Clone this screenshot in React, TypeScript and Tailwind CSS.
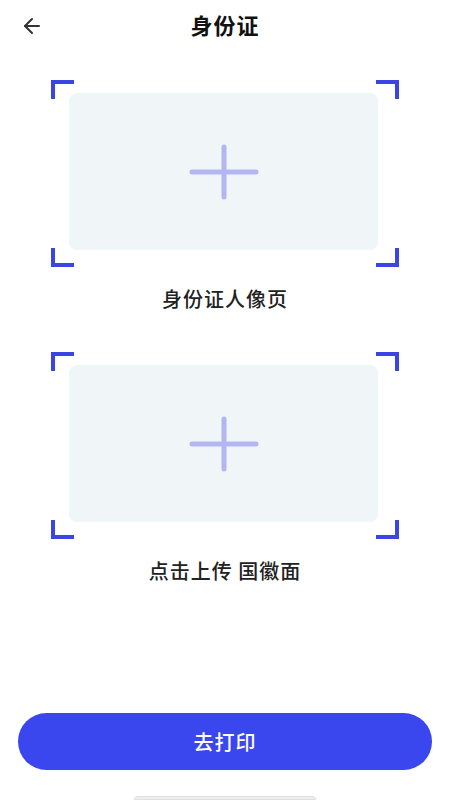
import { ArrowLeft } from "lucide-react";

function Corner({ pos }: { pos: "tl" | "tr" | "bl" | "br" }) {
  const cls = {
    tl: "top-0 left-0 border-t-4 border-l-4",
    tr: "top-0 right-0 border-t-4 border-r-4",
    bl: "bottom-0 left-0 border-b-4 border-l-4",
    br: "bottom-0 right-0 border-b-4 border-r-4",
  }[pos];
  return <span className={`absolute w-[23px] h-[19px] border-[#3b45e6] ${cls}`} />;
}

function UploadFrame({ label }: { label: string }) {
  return (
    <div className="flex flex-col items-center">
      <div className="relative w-[348px] h-[187px] flex items-center justify-center">
        <Corner pos="tl" />
        <Corner pos="tr" />
        <Corner pos="bl" />
        <Corner pos="br" />
        <div className="w-[309px] h-[157px] rounded-lg bg-[#f0f5f8] flex items-center justify-center -ml-[3px] -mt-[4px]">
          <svg width="70" height="56" viewBox="0 0 70 56">
            <path d="M3 28H67M35 3V53" stroke="#b3b6f1" strokeWidth="5" strokeLinecap="round" />
          </svg>
        </div>
      </div>
      <p className="mt-[19px] text-[20px] font-medium text-[#222] tracking-[1px] leading-[26px]">{label}</p>
    </div>
  );
}

export default function App() {
  return (
    <div
      className="w-[450px] h-[800px] bg-white flex flex-col relative"
      style={{ fontFamily: '"Noto Sans CJK SC", "Noto Sans", sans-serif' }}
    >
      <header className="h-[54px] flex items-center relative">
        <ArrowLeft className="absolute left-[20px] top-[14px] text-[#333]" size={24} strokeWidth={2} />
        <h1 className="mx-auto -mt-[5px] text-[22px] font-bold text-[#111] tracking-[1px]">身份证</h1>
      </header>

      <div className="flex flex-col items-center gap-[40px] mt-[26px]">
        <UploadFrame label="身份证人像页" />
        <UploadFrame label="点击上传 国徽面" />
      </div>

      <div className="mt-auto px-[18px] pb-[30px]">
        <button className="w-full h-[57px] rounded-full bg-[#3a46ee] text-white text-[20px] font-medium tracking-[1px]">
          去打印
        </button>
      </div>
      <div className="absolute bottom-0 left-[134px] w-[182px] h-[4px] rounded-t bg-[#eeeeee] border border-[#e0e0e0]" />
    </div>
  );
}
